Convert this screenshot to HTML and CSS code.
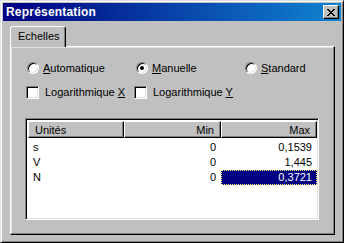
FILE: index.html
```html
<!DOCTYPE html>
<html>
<head>
<meta charset="utf-8">
<link rel="stylesheet" href="styles.css">
</head>
<body>
<div class="window">
  <div class="titlebar">
    <span class="title">Représentation</span>
    <span class="close"><svg width="8" height="7" viewBox="0 0 8 7"><path d="M0 0h2v1h1v1h2V1h1V0h2v1H7v1H6v1H5v1h1v1h1v1h1v1H6V6H5V5H3v1H2v1H0V6h1V5h1V4h1V3H2V2H1V1H0z" fill="#000"/></svg></span>
  </div>
  <div class="client">
    <div class="tabs"><div class="tab">Echelles</div></div>
    <div class="panel">
      <div class="row">
        <div class="opt"><span class="radio"></span><span><u>A</u>utomatique</span></div>
        <div class="opt"><span class="radio on"></span><span><u>M</u>anuelle</span></div>
        <div class="opt"><span class="radio"></span><span><u>S</u>tandard</span></div>
      </div>
      <div class="row checks">
        <div class="opt"><span class="check"></span><span>Logarithmique <u>X</u></span></div>
        <div class="opt"><span class="check"></span><span>Logarithmique <u>Y</u></span></div>
      </div>
      <div class="list">
        <div class="header">
          <div class="hcell left">Unités</div>
          <div class="hcell">Min</div>
          <div class="hcell">Max</div>
        </div>
        <div class="lrow"><span class="cell left">s</span><span class="cell">0</span><span class="cell">0,1539</span></div>
        <div class="lrow"><span class="cell left">V</span><span class="cell">0</span><span class="cell">1,445</span></div>
        <div class="lrow"><span class="cell left">N</span><span class="cell">0</span><span class="cell sel">0,3721</span></div>
      </div>
    </div>
  </div>
</div>
</body>
</html>
```
FILE: styles.css
```css
* { box-sizing: border-box; }
html, body { margin: 0; padding: 0; }
body {
  width: 344px;
  height: 243px;
  background: #c0c0c0;
  font-family: "Liberation Sans", Arial, sans-serif;
  font-size: 11px;
  color: #000;
  overflow: hidden;
}
.window {
  width: 344px;
  height: 243px;
  background: #c0c0c0;
  border: 1px solid;
  border-color: #dfdfdf #000 #000 #dfdfdf;
  box-shadow: inset 1px 1px 0 #fff, inset -1px -1px 0 #808080;
  padding: 2px;
  display: flex;
  flex-direction: column;
}
.titlebar {
  height: 18px;
  background: linear-gradient(to right, #000080, #1084d0);
  display: flex;
  align-items: center;
  justify-content: space-between;
  padding: 0 2px 0 3px;
}
.title {
  color: #fff;
  font-weight: bold;
  font-size: 12px;
  letter-spacing: 0.2px;
}
.close {
  width: 16px;
  height: 14px;
  background: #c0c0c0;
  border: 1px solid;
  border-color: #fff #000 #000 #fff;
  box-shadow: inset -1px -1px 0 #808080;
  display: flex;
  align-items: center;
  justify-content: center;
  padding-right: 1px;
}
.close svg { display: block; }
.client {
  flex: 1;
  display: flex;
  flex-direction: column;
  padding: 5px 6px 5px 7px;
}
.tabs {
  display: flex;
  height: 20px;
  position: relative;
  z-index: 1;
}
.tab {
  height: 21px;
  width: 56px;
  background: #c0c0c0;
  border: 1px solid;
  border-bottom: none;
  border-color: #fff #000 #c0c0c0 #fff;
  border-radius: 3px 3px 0 0;
  box-shadow: inset -1px 0 0 #808080;
  padding: 3px 0 0 7px;
}
.panel {
  flex: 1;
  border: 1px solid;
  border-color: #fff #000 #000 #fff;
  box-shadow: inset -1px -1px 0 #808080, inset 1px 1px 0 #dfdfdf;
  display: flex;
  flex-direction: column;
  padding: 14px 15px 14px 16px;
}
.row {
  display: grid;
  grid-template-columns: 109px 109px 1fr;
  height: 14px;
  align-items: center;
}
.checks {
  margin-top: 10px;
  margin-left: -1px;
  grid-template-columns: 108px 1fr;
}
.opt {
  display: flex;
  align-items: center;
  gap: 4px;
  white-space: nowrap;
}
.radio {
  width: 12px;
  height: 12px;
  border-radius: 50%;
  border: 1px solid;
  border-color: #808080 #fff #fff #808080;
  background: #fff;
  box-shadow: inset 1px 1px 0 #000, inset -1px -1px 0 #dfdfdf;
  display: flex;
  align-items: center;
  justify-content: center;
}
.radio.on::after {
  content: "";
  width: 4px;
  height: 4px;
  border-radius: 50%;
  background: #000;
}
.check {
  width: 13px;
  height: 13px;
  border: 1px solid;
  border-color: #808080 #fff #fff #808080;
  background: #fff;
  box-shadow: inset 1px 1px 0 #000, inset -1px -1px 0 #dfdfdf;
  margin-right: 2px;
}
.list {
  margin-top: 19px;
  flex: 1;
  background: #fff;
  border: 1px solid;
  border-color: #808080 #fff #fff #808080;
  box-shadow: inset 1px 1px 0 #000, inset -1px -1px 0 #dfdfdf;
  padding: 2px;
  margin-left: -2px;
}
.header {
  display: grid;
  grid-template-columns: 96px 97px 96px;
  height: 17px;
}
.hcell {
  background: #c0c0c0;
  border: 1px solid;
  border-color: #fff #000 #000 #fff;
  box-shadow: inset -1px -1px 0 #808080;
  text-align: right;
  padding: 2px 6px 0 6px;
  line-height: 13px;
}
.lrow {
  display: grid;
  grid-template-columns: 96px 97px 96px;
  height: 15px;
  line-height: 15px;
}
.lrow:first-of-type { margin-top: 2px; }
.header + .lrow { margin-top: 2px; }
.cell {
  text-align: right;
  padding: 0 5px;
}
.left { text-align: left; }
.cell.sel {
  background: #000080;
  color: #fff;
  outline: 1px dotted #ffff80;
  outline-offset: -1px;
}
```
